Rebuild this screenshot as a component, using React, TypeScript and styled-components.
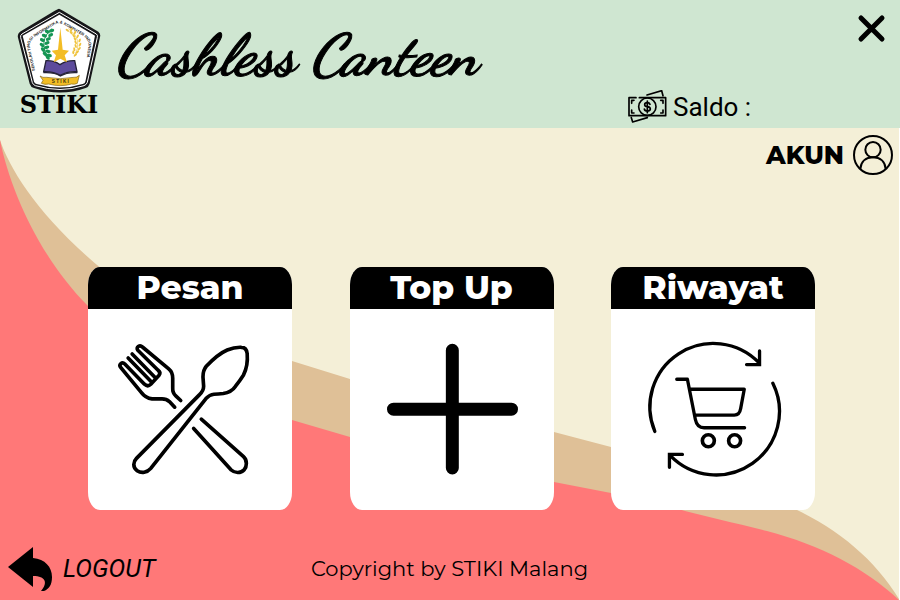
import React from "react";
import styled, { createGlobalStyle } from "styled-components";

const display = '"Montserrat", "Inter", "Open Sans", sans-serif';
const body = '"Roboto", "Liberation Sans", sans-serif';

const GlobalStyle = createGlobalStyle`
  *, *::before, *::after { box-sizing: border-box; }
  body { margin: 0; background: #fff; color: #000; }
  button { font: inherit; color: inherit; border: 0; padding: 0; background: none; cursor: pointer; }
  svg { display: block; flex: none; }
`;

const Page = styled.div`
  display: flex;
  flex-direction: column;
  min-height: 100vh;
`;

const Header = styled.header`
  display: grid;
  grid-template-columns: 84px 1fr 272px;
  column-gap: 14px;
  min-height: 128px;
  padding-left: 17px;
  background: #cfe6d1;
`;

const Brand = styled.div`
  display: flex;
  flex-direction: column;
  align-items: center;
  padding-top: 8px;
`;

const BrandName = styled.span`
  font: bold 24px/24px "DejaVu Serif", serif;
`;

const Title = styled.h1`
  margin: 0;
  padding-top: 24px;
  font: italic bold 58px/64px "Dancing Script", "Liberation Serif", serif;
  -webkit-text-stroke: 1px #000;
  white-space: nowrap;
`;

const HeaderSide = styled.div`
  display: flex;
  flex-direction: column;
  justify-content: space-between;
  padding: 14px 0 5px;
`;

const CloseButton = styled.button`
  align-self: flex-end;
  margin-right: 14px;
`;

const Balance = styled.div`
  display: flex;
  align-items: center;
  gap: 6px;
  font: 26px/32px ${body};
`;

const Main = styled.main`
  position: relative;
  isolation: isolate;
  flex: 1;
  display: flex;
  flex-direction: column;
  margin-right: 1px;
  background: #f4efd7;
`;

const Waves = styled.svg`
  position: absolute;
  inset: 0;
  z-index: -1;
  width: 100%;
  height: 100%;
`;

const AccountButton = styled.button`
  && {
    display: flex;
    align-items: center;
    align-self: flex-end;
    gap: 9px;
    margin: 7px 6px 0 0;
    font: 800 25px/40px ${display};
  }
`;

const Menu = styled.nav`
  flex: 1;
  display: flex;
  justify-content: space-between;
  align-items: flex-start;
  padding: 92px 84px 32px 88px;
`;

const Card = styled.button`
  width: 204px;
  overflow: hidden;
  border-radius: 12px / 18px;
  && { background: #fff; }
`;

const CardTitle = styled.span`
  display: block;
  height: 42px;
  background: #000;
  color: #fff;
  font: 800 33px/40px ${display};
`;

const CardIcon = styled.svg`
  width: 146px;
  height: 131px;
  margin: 35px auto;
  overflow: visible;
  fill: none;
  stroke: #000;
  stroke-width: 11;
  stroke-linecap: round;
  stroke-linejoin: round;
`;

const Footer = styled.footer`
  display: grid;
  grid-template-columns: 1fr auto 1fr;
  align-items: center;
  padding: 0 8px 9px;
`;

const LogoutButton = styled.button`
  && {
    display: flex;
    align-items: center;
    justify-self: start;
    gap: 11px;
    font: italic 25px/44px ${body};
  }
`;

const Copyright = styled.p`
  margin: 0;
  font: 21px/44px ${display};
`;

const leaves = [
  [154, 88, -20], [141, 91, 20], [151, 101, -25], [132, 103, 20], [144, 113, -20],
  [126, 116, 30], [140, 125, -20], [125, 131, 40], [139, 138, -10], [128, 145, 50],
  [143, 150, 10], [134, 158, 40], [147, 162, 20], [142, 168, 50],
];

const grains = [
  [201, 87, -50], [213, 85, 20], [212, 94, -40], [224, 94, 25], [220, 103, -35],
  [232, 105, 25], [224, 113, -30], [238, 117, 20], [226, 123, -25], [239, 130, 30],
  [226, 134, -20], [237, 142, 40], [222, 144, -10], [231, 152, 45], [219, 153, 0], [225, 161, 50],
];

const Emblem = () => (
  <svg width="84" height="85" viewBox="50 20 252 255" role="img" aria-label="STIKI">
    <path d="M176 22Q180 23 188 28L294 91Q302 98 299 107L268 247Q265 257 256 260Q180 287 101 260Q91 257 88 247L53 109Q50 98 59 91L162 29Q172 23 176 22Z" fill="#161619" />
    <path d="M177 33L288 98Q293 101 291 108L261 243Q259 250 251 253Q180 276 105 253Q98 250 96 244L61 109Q59 102 65 98Z" fill="none" stroke="#fff" strokeWidth="3" />
    <path d="M177 40L284 103L255 241Q254 246 247 248Q180 269 109 248Q103 246 101 241L67 103Z" fill="#fff" />
    <path id="emblem-rim" d="M104 208L89 138Q86 120 103 107L165 69Q177 63 189 69L250 105Q267 118 264 138L252 214" fill="none" />
    <text fontFamily="Liberation Sans, sans-serif" fontWeight="bold" fontSize="12" fill="#222">
      <textPath href="#emblem-rim">SEKOLAH TINGGI INFORMATIKA &amp; KOMPUTER INDONESIA</textPath>
    </text>
    <path d="M155 82Q111 118 146 174" fill="none" stroke="#159553" strokeWidth="3" />
    {leaves.map(([x, y, r]) => (
      <ellipse key={`${x}-${y}`} cx={x} cy={y} rx="8" ry="5" fill="#159553" transform={`rotate(${r} ${x} ${y})`} />
    ))}
    <path d="M204 82Q251 112 222 166" fill="none" stroke="#efc33c" strokeWidth="2" />
    {grains.map(([x, y, r]) => (
      <ellipse key={`${x}-${y}`} cx={x} cy={y} rx="3" ry="6" fill="#efc33c" transform={`rotate(${r} ${x} ${y})`} />
    ))}
    <path d="M137 178Q162 177 179 190Q198 177 223 178L230 211Q200 209 180 222Q160 210 130 211Z" fill="#5d4b9c" stroke="#252238" strokeWidth="4" />
    <path d="M129 214Q162 212 180 224Q200 212 231 214" fill="none" stroke="#252238" strokeWidth="4" />
    <path d="M180 79L187 145L206 148L193 162L200 183L180 172L160 183L167 162L154 148L173 145Z" fill="#f3bd25" />
    <path d="M119 224Q127 230 139 228Q180 236 220 228Q228 230 237 222L231 246Q223 250 214 248Q180 258 145 248Q134 251 123 246L128 237Z" fill="#f3bd25" stroke="#806319" strokeWidth="2" />
    <text x="180" y="246" textAnchor="middle" fontFamily="Liberation Sans, sans-serif" fontWeight="bold" fontSize="14" fill="#40330e">S T I K I</text>
  </svg>
);

const CloseIcon = () => (
  <svg width="29" height="29" viewBox="0 0 29 29" stroke="#000" strokeWidth="5" strokeLinecap="round" aria-hidden="true">
    <path d="M4 4L25 25M25 4L4 25" />
  </svg>
);

const MoneyIcon = () => (
  <svg width="39" height="33" viewBox="53 29 117 99" fill="none" stroke="#000" strokeWidth="5" strokeLinecap="round" strokeLinejoin="round" aria-hidden="true">
    <path d="M77 52H56V106H166V52H87M110 44L154 31L158 46M63 112L67 125L111 112" />
    <path d="M71 60H64V69M151 60H158V69M71 98H64V89M151 98H158V89" />
    <circle cx="111" cy="79" r="26" />
    <path d="M119 72Q117 67 111 67Q103 67 103 73Q103 78 111 79Q120 80 120 86Q120 92 111 92Q103 92 102 86M111 62V97" />
  </svg>
);

const UserIcon = () => (
  <svg width="40" height="40" viewBox="0 0 120 120" fill="none" stroke="#000" strokeWidth="6" aria-hidden="true">
    <circle cx="60" cy="60" r="57" />
    <circle cx="60" cy="44" r="23" />
    <path d="M22 102C24 79 39 67 60 67S96 79 98 102" />
  </svg>
);

const ReplyIcon = () => (
  <svg width="44" height="44" viewBox="0 0 44 44" aria-hidden="true">
    <path d="M0 20L25 0V11C37 12 44 20 44 30C44 38 41 42 36 44H33C40 36 38 29 25 29V40Z" />
  </svg>
);

const CutleryIcon = () => (
  <CardIcon viewBox="111 261 438 394" aria-hidden="true">
    <path d="M302 431L288 418Q277 408 278 393V364Q278 346 266 336L187 270C179 262 166 270 173 280L234 340Q243 347 237 355L212 382Q203 391 193 382L134 321C126 313 114 322 122 332L184 407Q196 423 216 426H246Q259 426 268 434L284 451" />
    <path d="M156 291L225 362M144 303L212 373" />
    <path d="M169 605L358 414Q371 402 371 388L369 360Q369 340 379 328Q414 291 442 279Q464 270 485 271Q500 271 502 290Q505 326 491 354Q480 371 467 388Q455 406 430 410Q414 412 402 412Q389 413 378 425L212 635C201 648 184 651 171 642C157 632 159 615 169 605Z" />
    <path d="M364 487L491 600C503 611 501 630 493 639C483 650 465 650 454 640L341 515" />
  </CardIcon>
);

const PlusIcon = () => (
  <CardIcon viewBox="117 252 438 394" aria-hidden="true">
    <path d="M337 271V625M160 448H515" strokeWidth="39" />
  </CardIcon>
);

const CartIcon = () => (
  <CardIcon viewBox="120 252 438 394" aria-hidden="true">
    <path d="M164 515A191 191 0 0 1 478 309M479 273V314H440" strokeWidth="10" strokeLinejoin="miter" />
    <path d="M519 370A191 191 0 0 1 210 587M208 623V584H247" strokeWidth="10" strokeLinejoin="miter" />
    <path d="M230 358H262L286 479Q291 504 312 504H434M270 388H433L422 447Q419 466 403 466H285" strokeWidth="10" />
    <circle cx="325" cy="543" r="18" />
    <circle cx="404" cy="543" r="18" />
  </CardIcon>
);

const items = [
  { title: "Pesan", Icon: CutleryIcon },
  { title: "Top Up", Icon: PlusIcon },
  { title: "Riwayat", Icon: CartIcon },
];

export default function App() {
  return (
    <Page>
      <GlobalStyle />
      <Header>
        <Brand>
          <Emblem />
          <BrandName>STIKI</BrandName>
        </Brand>
        <Title>Cashless Canteen</Title>
        <HeaderSide>
          <CloseButton type="button" aria-label="Tutup">
            <CloseIcon />
          </CloseButton>
          <Balance>
            <MoneyIcon />
            <span>Saldo :</span>
          </Balance>
        </HeaderSide>
      </Header>
      <Main>
        <Waves viewBox="0 128 899 472" preserveAspectRatio="none" aria-hidden="true">
          <path d="M0 140C10 170 40 218 103 270C150 309 220 338 292 361L350 379C420 398 490 417 554 432L611 447C670 462 740 480 793 508C840 530 875 560 899 599V600H0Z" fill="#dfc097" />
          <path d="M0 140C10 190 40 258 88 306C140 363 215 397 292 420L350 437C420 456 490 469 554 482L611 493L675 508C705 517 737 523 767 531C820 545 865 568 899 600H0Z" fill="#ff7878" />
        </Waves>
        <AccountButton type="button">
          AKUN
          <UserIcon />
        </AccountButton>
        <Menu aria-label="Menu utama">
          {items.map(({ title, Icon }) => (
            <Card key={title} type="button">
              <CardTitle>{title}</CardTitle>
              <Icon />
            </Card>
          ))}
        </Menu>
        <Footer>
          <LogoutButton type="button">
            <ReplyIcon />
            LOGOUT
          </LogoutButton>
          <Copyright>Copyright by STIKI Malang</Copyright>
        </Footer>
      </Main>
    </Page>
  );
}
